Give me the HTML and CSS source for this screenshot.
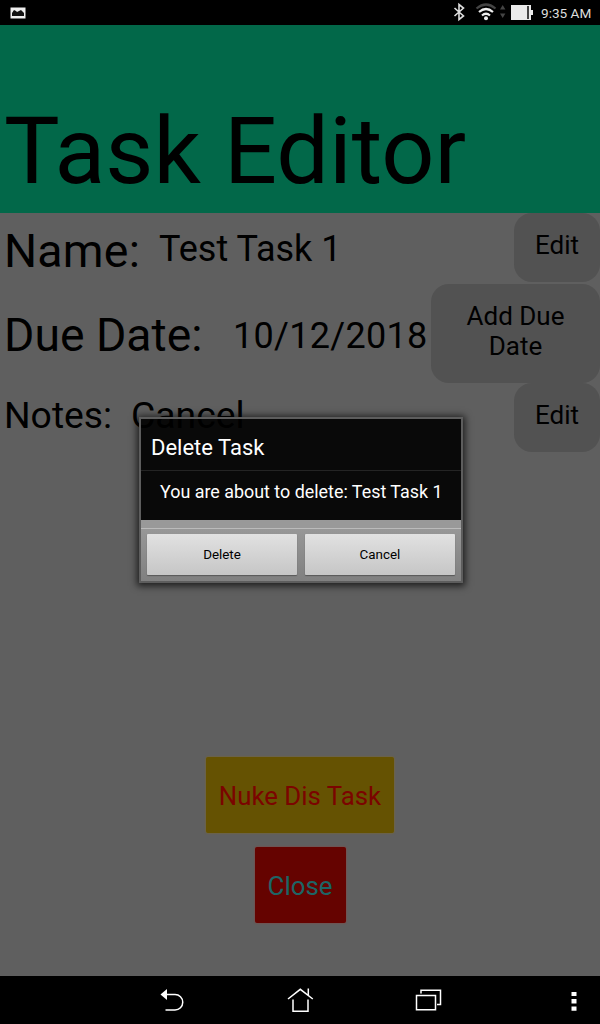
FILE: index.html
```html
<!DOCTYPE html>
<html lang="en">
<head>
<meta charset="utf-8">
<title>Task Editor</title>
<link rel="stylesheet" href="styles.css">
</head>
<body>
<div class="screen">
  <header class="status">
    <svg class="status-photo" width="16" height="12" viewBox="0 0 16 12"><rect x="0.5" y="0.5" width="15" height="11" fill="#eee"/><path d="M2 9V6l2-3 2 1 1 1 2-1 2-1 1 1 2 2v3z" fill="#111"/></svg>
    <svg class="status-icons" width="82" height="24" viewBox="452 0 82 24">
      <path d="M454.500 8l9 8-4.500 3.500V4.500L463.500 8l-9 8" fill="none" stroke="#ddd" stroke-width="1.600"/>
      <g fill="none" stroke-width="2.200"><path d="M476.500 8.500q9.500-8 19 0" stroke="#444"/><path d="M479 12q7-6 14 0M482 15.500q4-3.500 8 0" stroke="#eee"/></g>
      <circle cx="486" cy="18.300" r="2" fill="#eee"/>
      <path d="M500 9.500l2.700-4.500 2.700 4.500zM500 13.500h5.400l-2.700 4.500z" fill="#444"/>
      <path d="M511 5h20v5h2v5h-2v5h-20z" fill="#eaeaea"/><path d="M527 6h2v13h-2z" fill="#444"/>
    </svg>
    <span class="clock">9:35 AM</span>
  </header>
  <main class="app">
    <h1 class="title"><span>Task Editor</span></h1>
    <section class="row row-name">
      <span class="label">Name:</span><span class="value">Test Task 1</span>
      <button class="pill">Edit</button>
    </section>
    <section class="row row-due">
      <span class="label">Due Date:</span><span class="value">10/12/2018</span>
      <button class="pill pill-wide">Add Due<br>Date</button>
    </section>
    <section class="row row-notes">
      <span class="label">Notes:</span><span class="value">Cancel</span>
      <button class="pill">Edit</button>
    </section>
    <div class="actions">
      <button class="nuke">Nuke Dis Task</button>
      <button class="close">Close</button>
    </div>
  </main>
  <div class="dialog" role="dialog">
    <h2 class="dialog-title">Delete Task</h2>
    <p class="dialog-text">You are about to delete: Test Task 1</p>
    <div class="dialog-buttons"><button>Delete</button><button>Cancel</button></div>
  </div>
  <nav class="nav">
    <svg width="600" height="48" viewBox="0 976 600 48" fill="none" stroke="#fff" stroke-width="1.500">
      <path d="M166 994.500h9a7.700 7.700 0 0 1 0 15.500h-9.500"/><path d="M160.500 994.500l6.500-5.500v11z" fill="#fff" stroke="none"/>
      <path d="M288 999l12.300-9.700 12.500 9.700M293 999.500v11.700h15v-11.700M308.300 995.500v-7"/>
      <path d="M421 993.500v-3.200h19.500v14.200h-3.500M416.500 995.500h19v14.200h-19z"/>
      <path d="M571.500 992h5v4h-5zM571.500 999h5v4.500h-5zM571.500 1006.500h5v4.200h-5z" fill="#fff" stroke="none"/>
    </svg>
  </nav>
</div>
</body>
</html>
```
FILE: styles.css
```css
* { box-sizing: border-box; }
body { margin: 0; background: #000; font-family: Roboto, sans-serif; color: #000; }
button { border: 0; padding: 0; font-family: inherit; color: inherit; }
h1, h2, p { margin: 0; font-weight: 400; }
.screen { position: relative; width: 600px; height: 1024px; display: flex; flex-direction: column; overflow: hidden; }
.status { height: 25px; background: #000; display: flex; align-items: flex-start; padding: 0 8px 0 10px; }
.status-photo { margin-top: 7px; }
.status-icons { margin-left: auto; }
.clock { color: #ddd; font-size: 13.6px; line-height: 26px; width: 51px; margin-left: 7px; white-space: nowrap; }
.app { height: 951px; background: #5f5f5f; display: flex; flex-direction: column; }
.title { height: 188px; background: #026849; padding: 71px 0 0 4px; font-size: 93.4px; line-height: 110px; white-space: nowrap; }
.row { display: flex; align-items: flex-start; padding-left: 4px; white-space: nowrap; }
.row-name { height: 71px; }
.row-due { height: 99px; }
.row-notes { height: 70px; }
.label { font-size: 46.5px; line-height: 54px; }
.value { font-size: 36px; line-height: 42px; }
.row-name .label { margin-top: 11px; width: 155px; letter-spacing: .2px; }
.row-name .value { margin-top: 15px; }
.row-due .label { margin-top: 24px; width: 229px; font-size: 46.3px; }
.row-due .value { margin-top: 31px; letter-spacing: .3px; }
.row-notes .label { margin-top: 10px; font-size: 37.3px; line-height: 44px; width: 127px; }
.row-notes .value { margin-top: 11px; font-size: 37.3px; }
.pill { margin-left: auto; width: 86px; height: 69px; border-radius: 18px; background: #525252; font-size: 26px; line-height: 30px; padding-bottom: 6px; }
.pill-wide { width: 169px; height: 99px; }
.actions { margin-top: 304px; display: flex; flex-direction: column; align-items: center; gap: 14px; }
.nuke, .close { font-size: 25.8px; height: 76px; border-radius: 2px; white-space: nowrap; padding-top: 2px; }
.nuke { width: 188px; background: #655202; color: #7b0400; box-shadow: 0 0 2px #8b6d15; }
.close { width: 91px; background: #650300; color: #1c6666; box-shadow: 0 0 2px #963c38; }
.dialog { position: absolute; left: 139px; top: 417px; width: 324px; height: 166px; border: 2px solid #5d5d5d; background: rgba(0,0,0,.9) padding-box; box-shadow: 0 1px 7px 2px rgba(0,0,0,.7); }
.dialog-title { height: 52px; border-bottom: 1px solid #242424; padding-left: 10px; color: #fff; font-size: 22px; line-height: 57px; }
.dialog-text { height: 49px; padding-left: 19px; color: #fff; font-size: 17.9px; line-height: 42px; white-space: nowrap; }
.dialog-buttons { height: 61px; padding: 14px 6px 6px; display: flex; gap: 8px; background: linear-gradient(#999 0 8px, #bbb 8px 9px, #979797 9px, #808080); }
.dialog-buttons button { flex: 1; height: 41px; background: linear-gradient(#e1e1e1, #c6c6c6); font-size: 13.4px; box-shadow: 0 1px 1px rgba(70,70,70,.7); border-radius: 1px; }
.nav { height: 48px; background: #000; }
.nav svg { display: block; }
```
